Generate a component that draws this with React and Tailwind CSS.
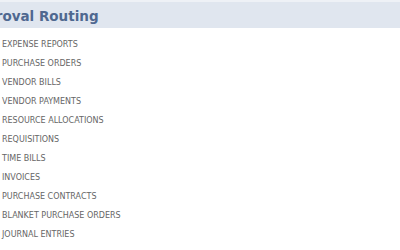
import React from "react";

const items = [
  "EXPENSE REPORTS",
  "PURCHASE ORDERS",
  "VENDOR BILLS",
  "VENDOR PAYMENTS",
  "RESOURCE ALLOCATIONS",
  "REQUISITIONS",
  "TIME BILLS",
  "INVOICES",
  "PURCHASE CONTRACTS",
  "BLANKET PURCHASE ORDERS",
  "JOURNAL ENTRIES",
];

export default function App() {
  return (
    <div className="w-[400px] h-[250px] overflow-hidden bg-white font-['DejaVu_Sans',sans-serif]">
      <div className="h-[2px] bg-[#eef1f6]" />
      <div className="h-[26px] bg-[#e0e6ef] flex items-center pt-[3px] overflow-hidden">
        <span className="ml-[-34px] text-[13.5px] font-bold text-[#4f6890] whitespace-nowrap">
          Approval Routing
        </span>
      </div>
      <ul className="pt-[7px]">
        {items.map(item => (
          <li key={item} className="h-[19px] flex items-center pl-[2px] text-[8px] text-[#666] whitespace-nowrap">
            {item}
          </li>
        ))}
      </ul>
    </div>
  );
}
